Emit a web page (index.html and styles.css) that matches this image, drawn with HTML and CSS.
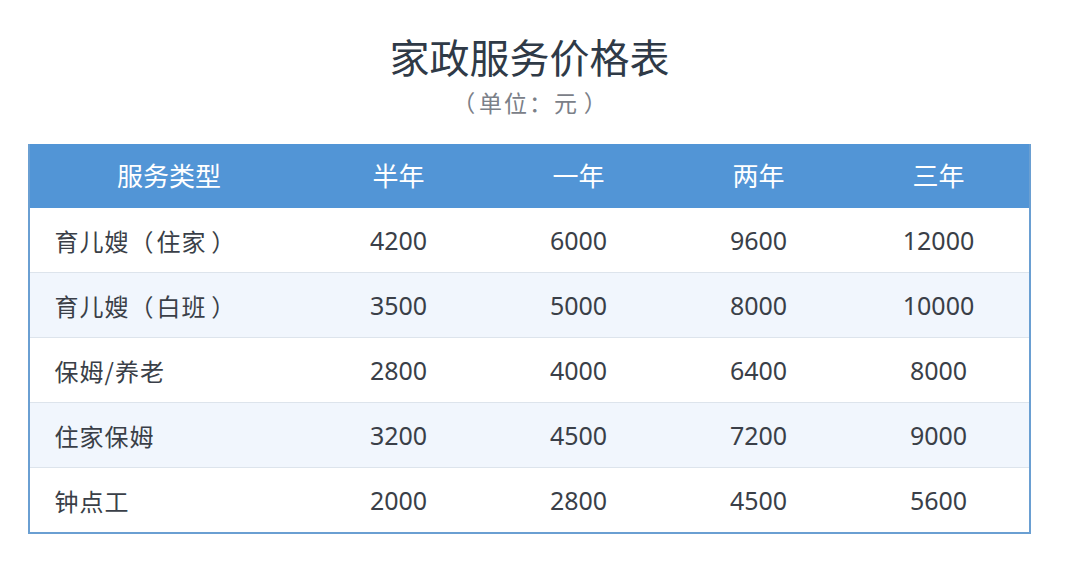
FILE: index.html
```html
<!DOCTYPE html>
<html lang="zh">
<head>
<meta charset="utf-8">
<title>家政服务价格表</title>
<link rel="stylesheet" href="styles.css">
</head>
<body>
<div class="page">
  <h1 class="title">家政服务价格表</h1>
  <div class="unit"><span class="lp">（</span>单位：元<span class="rp">）</span></div>
  <table class="price">
    <thead>
      <tr><th class="type">服务类型</th><th>半年</th><th>一年</th><th>两年</th><th>三年</th></tr>
    </thead>
    <tbody>
      <tr><td class="type">育儿嫂<span class="lp">（</span>住家<span class="rp">）</span></td><td>4200</td><td>6000</td><td>9600</td><td>12000</td></tr>
      <tr><td class="type">育儿嫂<span class="lp">（</span>白班<span class="rp">）</span></td><td>3500</td><td>5000</td><td>8000</td><td>10000</td></tr>
      <tr><td class="type">保姆/养老</td><td>2800</td><td>4000</td><td>6400</td><td>8000</td></tr>
      <tr><td class="type">住家保姆</td><td>3200</td><td>4500</td><td>7200</td><td>9000</td></tr>
      <tr><td class="type">钟点工</td><td>2000</td><td>2800</td><td>4500</td><td>5600</td></tr>
    </tbody>
  </table>
</div>
</body>
</html>
```

FILE: styles.css
```css
html, body {
  margin: 0;
  padding: 0;
  background: #ffffff;
}
body {
  font-family: "Noto Sans", "Noto Sans CJK SC", sans-serif;
  color: #3a3f48;
  text-spacing-trim: space-all;
}
.page {
  width: 1067px;
  padding-top: 30px;
  display: flex;
  flex-direction: column;
  align-items: center;
}
.title {
  margin: 0 0 0 -8px;
  font-family: "Noto Sans CJK SC", sans-serif;
  font-weight: 400;
  font-size: 40px;
  line-height: 52px;
  color: #2f3a47;
}
.unit {
  margin: 4px 0 0 -6px;
  font-family: "Noto Sans CJK SC", sans-serif;
  font-size: 23px;
  line-height: 32px;
  letter-spacing: 2px;
  color: #7b8088;
}
.lp {
  padding-right: 0.08em;
}
.rp {
  padding-left: 0.2em;
}
.price {
  margin: 26px 0 0 -9px;
  width: 1000px;
  border-collapse: collapse;
  table-layout: fixed;
  border: 2px solid #6a9fd2;
  border-top: none;
}
.price th {
  width: 180px;
  height: 60px;
  padding: 0 0 4px 0;
  background: #5295d6;
  color: #ffffff;
  font-family: "Noto Sans CJK SC", sans-serif;
  font-weight: 400;
  font-size: 26px;
  text-align: center;
}
.price th.type {
  width: 279px;
}
.price td {
  height: 64px;
  padding: 0;
  text-align: center;
  font-family: "Noto Sans", sans-serif;
  font-size: 25px;
  color: #3a3f48;
  border-top: 1px solid #dde4ec;
}
.price td.type {
  text-align: left;
  padding-left: 25px;
  font-family: "Noto Sans CJK SC", sans-serif;
  font-size: 24px;
  letter-spacing: 1px;
}
.price tbody tr:first-child td {
  border-top: none;
}
.price tbody tr:nth-child(even) td {
  background: #f1f6fd;
}
```
